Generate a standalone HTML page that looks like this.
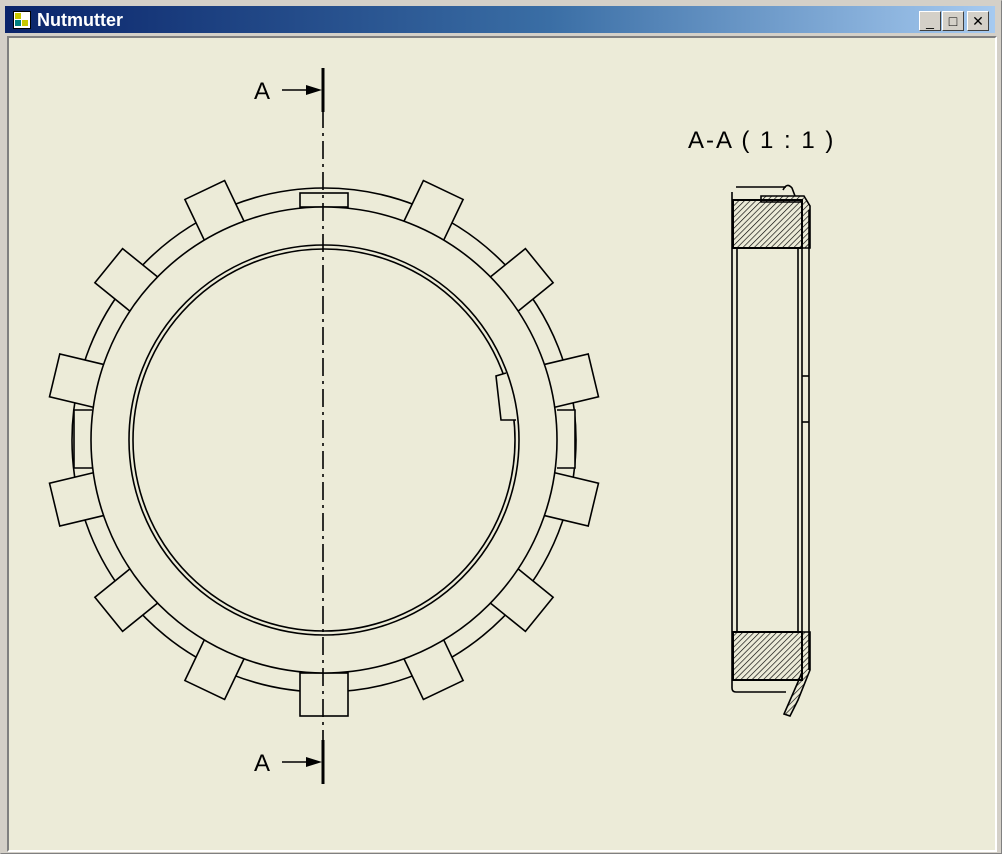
<!DOCTYPE html>
<html><head><style>
html,body{margin:0;padding:0;width:1002px;height:854px;overflow:hidden;background:#d4d0c8;font-family:"Liberation Sans",sans-serif}
.win{position:absolute;left:0;top:0;width:1000px;height:852px;border:1px solid #808080;border-top-color:#d4d0c8;border-left-color:#d4d0c8;background:#d4d0c8}
.title{position:absolute;left:4px;top:5px;width:990px;height:27px;background:linear-gradient(to right,#0a246a 0%,#3a6ea5 55%,#a6caf0 100%)}
.title span{position:absolute;left:32px;top:4px;color:#fff;font-weight:bold;font-size:18px}
.ico{position:absolute;left:8px;top:5px;width:16px;height:16px;background:#fff;border:1px solid #000}
.btn{position:absolute;top:5px;width:20px;height:18px;background:#d4d0c8;border:1px solid;border-color:#fff #404040 #404040 #fff;font-size:14px;text-align:center;line-height:18px}
.client{position:absolute;left:6px;top:35px;width:986px;height:812px;background:#ecebd8;border:2px solid;border-color:#808080 #fff #fff #808080}
</style></head><body>
<div class="win">
<div class="title"><div class="ico"><div style="position:absolute;left:1px;top:1px;width:6px;height:6px;background:#c8c800"></div><div style="position:absolute;left:8px;top:8px;width:6px;height:6px;background:#c8c800"></div><div style="position:absolute;left:1px;top:8px;width:6px;height:6px;background:#008080"></div></div><span>Nutmutter</span>
<div class="btn" style="left:914px">_</div><div class="btn" style="left:937px">□</div><div class="btn" style="left:962px">✕</div></div>
<div class="client"></div>
</div>
<svg width="1002" height="854" style="position:absolute;left:0;top:0">
<defs>
<pattern id="h" width="4" height="4" patternUnits="userSpaceOnUse" patternTransform="rotate(45)"><line x1="0" y1="0" x2="0" y2="4" stroke="#000" stroke-width="1.3"/></pattern>
<g id="tab"><path d="M-22,-232 L-22,-277 L22,-277 L22,-232" fill="#ecebd8" stroke="#000" stroke-width="1.6"/></g>
</defs>
<g fill="none" stroke="#000" stroke-width="1.6">
<g transform="translate(324,440)">
<circle r="252"/>
<use href="#tab" transform="rotate(25.5)"/><use href="#tab" transform="rotate(51)"/><use href="#tab" transform="rotate(76.5)"/>
<use href="#tab" transform="rotate(-25.5)"/><use href="#tab" transform="rotate(-51)"/><use href="#tab" transform="rotate(-76.5)"/>
<use href="#tab" transform="rotate(154.5)"/><use href="#tab" transform="rotate(129)"/><use href="#tab" transform="rotate(103.5)"/>
<use href="#tab" transform="rotate(-154.5)"/><use href="#tab" transform="rotate(-129)"/><use href="#tab" transform="rotate(-103.5)"/>
</g>
<rect x="300" y="193" width="48" height="14" fill="#ecebd8"/>
<rect x="300" y="673" width="48" height="43" fill="#ecebd8"/>
<path d="M557,410 L575,410 L575,468 L557,468" fill="#ecebd8"/>
<path d="M92,410 L74,410 L74,468 L92,468" fill="#ecebd8"/>
<g transform="translate(324,440)">
<circle r="233" fill="#ecebd8"/>
<circle r="195"/><circle r="191"/>
</g>
<path d="M506,373 L496,376 L501,420 L516,420" fill="#ecebd8" />
</g>
<line x1="323" y1="110" x2="323" y2="742" stroke="#000" stroke-width="1.6" stroke-dasharray="18,5,3,5"/>
<g stroke="#000" stroke-width="3"><line x1="323" y1="68" x2="323" y2="112"/><line x1="323" y1="740" x2="323" y2="784"/></g>
<g stroke="#000" stroke-width="1.6"><line x1="282" y1="90" x2="310" y2="90"/><line x1="282" y1="762" x2="310" y2="762"/></g>
<path d="M322,90 L306,85 L306,95Z M322,762 L306,757 L306,767Z"/>
<g font-family="Liberation Sans,sans-serif" font-size="24" fill="#000">
<text x="254" y="99">A</text><text x="254" y="771">A</text>
<text x="688" y="148" letter-spacing="2">A-A  ( 1 : 1 )</text></g>
<g fill="none" stroke="#000" stroke-width="1.6">
<path d="M736,187 L786,187 M732,192 L732,688 Q732,692 736,692 L786,692"/>
<line x1="737" y1="248" x2="737" y2="632"/>
<line x1="798" y1="248" x2="798" y2="632"/>
<line x1="802" y1="248" x2="802" y2="632"/>
<line x1="809" y1="210" x2="809" y2="670"/>
<line x1="802" y1="376" x2="809" y2="376"/><line x1="802" y1="422" x2="809" y2="422"/>
</g>
<rect x="733" y="200" width="69" height="48" fill="url(#h)" stroke="#000" stroke-width="2"/>
<rect x="733" y="632" width="69" height="48" fill="url(#h)" stroke="#000" stroke-width="2"/>
<path d="M761,196 L804,196 L810,206 L810,248 L802,248 L802,202 L761,202Z" fill="url(#h)" stroke="#000" stroke-width="1.6"/>
<path d="M783,190 Q787,182 792,188 L795,196" fill="none" stroke="#000" stroke-width="1.6"/>
<path d="M802,632 L810,632 L810,670 L798,700 L790,716 L784,714 L798,682 L802,672Z" fill="url(#h)" stroke="#000" stroke-width="1.6"/>
</svg>
</body></html>
